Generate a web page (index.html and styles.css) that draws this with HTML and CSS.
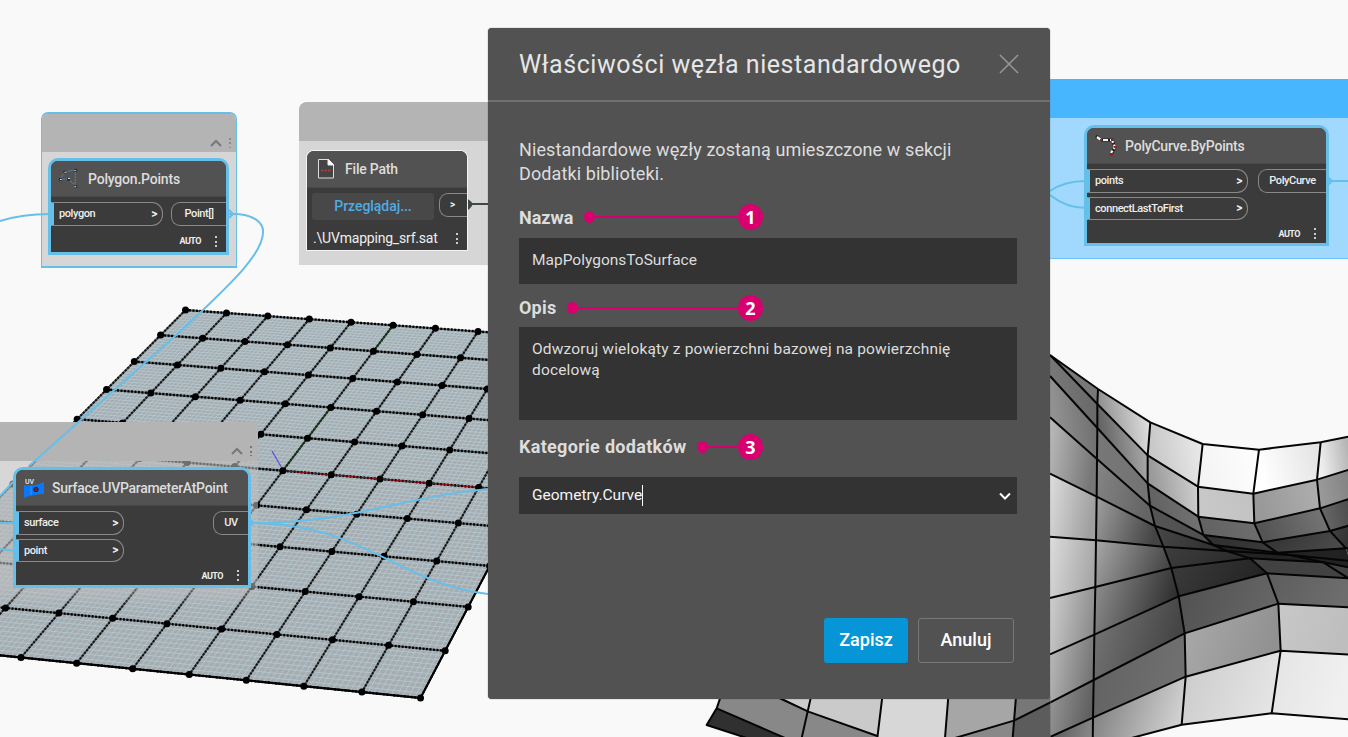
FILE: index.html
```html
<!DOCTYPE html>
<html lang="pl">
<head>
<meta charset="utf-8">
<title>Właściwości węzła niestandardowego</title>
<link rel="stylesheet" href="styles.css">
</head>
<body>
<main class="workspace">
  <svg class="scene" viewBox="0 0 1348 737" aria-hidden="true">
    <defs><clipPath id="front"><path d="M0 200H1081V420H0Z"/></clipPath></defs>
    <g id="plane"></g>
    <g id="surface" transform="translate(1040 330) scale(.33333)"></g>
    <g id="surface-edge" transform="translate(690 600) scale(.33333)" clip-path="url(#front)">
      <path d="M90 290L80 325 50 375 170 414H1100V290Z" fill="#888"/>
      <path d="M80 325L50 375 170 414H285Z" fill="#303030"/>
      <path d="M270 290H362L355 335Z" fill="#ccc"/>
      <path d="M362 290H577L562 408 355 335Z" fill="#cacaca"/>
      <path d="M577 290H775L765 414H562Z" fill="#d7d7d7"/>
      <path d="M775 290H978L972 362 795 414H765Z" fill="#a6a6a6"/>
      <path d="M978 290H1100L1082 308 972 362Z" fill="#777"/>
      <path d="M972 362L1100 296V414H968Z" fill="#5c5c5c"/>
      <path d="M92 290L80 325 50 375 170 414M80 325L285 414M268 294L355 335 562 408M363 290L335 414M577 290L562 414M775 290L765 414M978 290L968 414M795 414L972 362 1084 306" class="edge"/>
    </g>
  </svg>

  <section class="group group-polygon"><div class="group-head"><svg class="caret" viewBox="0 0 12 8"><path d="M1 7L6 2 11 7"/></svg><i class="dots cut"></i></div></section>
  <section class="group group-file"><div class="group-head"></div></section>
  <section class="group group-uv"><div class="group-head"><svg class="caret" viewBox="0 0 12 8"><path d="M1 7L6 2 11 7"/></svg><i class="dots"></i></div></section>
  <section class="group group-curve"><div class="group-head"></div></section>

  <svg class="scene wires" viewBox="0 0 1348 737" aria-hidden="true">
    <path d="M0 221C16 216 30 214 50 214M229 214C254 213 264 223 263 233C262 256 226 288 183 329L29 466M13 482L0 496M0 523H15M0 549L15 551M251 523C355 523 400 497 488 489M251 523C364 523 398 584 488 594"/>
    <path d="M1050 191C1060 184 1072 181 1086 181M1050 195C1060 203 1072 208 1086 208M1328 181H1348"/>
    <path d="M229 210l4 4-4 4M1328 177l4 4-4 4M249 519l5 4-5 4"/>
    <path d="M468 204H488" class="dark"/><path d="M469 201q5 3 0 7z" class="dark"/>
  </svg>

  <article class="node node-polygon">
    <header><svg class="icon" viewBox="0 0 22 22"><path d="M7 3L18 1M18 2V18L10 11 1 11 7 3" fill="none" stroke="#4b83bd" stroke-width="1.3" stroke-dasharray="2 1"/><path d="M5 2h3v3H5zM17 0h3v3h-3zM0 10h3v3H0zM9 10h3v3H9zM17 18h3v3h-3z" fill="#222"/><path d="M6 3h2v1H6zM17 1h2v1h-2zM1 11h2v1H1zM10 10h2v1h-2zM17 19h2v1h-2z" fill="#eee"/></svg><h2>Polygon.Points</h2></header>
    <div class="ports"><div class="inputs"><span class="port in">polygon<b>&gt;</b></span></div><span class="port out">Point[]</span></div>
    <footer>AUTO<i class="dots"></i></footer>
  </article>

  <article class="node node-file">
    <header><svg class="icon" viewBox="0 0 18 22"><path d="M1.5 1.5H11L16.500 7V20H1.500Z" fill="#444" stroke="#ddd"/><path d="M11 1V7H17Z" fill="#fff" stroke="#eee"/><path d="M4 12.500H14" stroke="#a84545" stroke-width="1.500" stroke-dasharray="2.500 1"/></svg><h2>File Path</h2></header>
    <div class="browse-row"><span class="browse">Przeglądaj...</span><span class="port out"><b>&gt;</b></span></div>
    <div class="path-row"><span>.\UVmapping_srf.sat</span><i class="dots"></i></div>
  </article>

  <article class="node node-uv">
    <header><svg class="icon" viewBox="0 0 22 22"><path d="M1 8Q10 10 21 5V17Q10 17 1 21Z" fill="#0878f9"/><path d="M8 9V18" stroke="#3293ff"/><circle cx="13" cy="12.500" r="2.200" fill="#722336" stroke="#172441"/><text x="2" y="6.500" class="icon-text">UV</text></svg><h2>Surface.UVParameterAtPoint</h2></header>
    <div class="ports"><div class="inputs"><span class="port in">surface<b>&gt;</b></span><span class="port in">point<b>&gt;</b></span></div><span class="port out">UV</span></div>
    <footer>AUTO<i class="dots"></i></footer>
  </article>

  <article class="node node-curve">
    <header><svg class="icon" viewBox="0 0 24 24"><path d="M2 2L7 6H18L21 13 17 21" fill="none" stroke="#222" stroke-width="3"/><path d="M3 3L7 6H18L21 13 17 19" fill="none" stroke="#f4f4f4" stroke-width="2.200" stroke-dasharray="5 2"/><path d="M6 5h2v3H6zM17 5h3v2h-3zM20 12h3v2h-3zM16 19h3v3h-3z" fill="#8c2525"/></svg><h2>PolyCurve.ByPoints</h2></header>
    <div class="ports"><div class="inputs"><span class="port in">points<b>&gt;</b></span><span class="port in">connectLastToFirst<b>&gt;</b></span></div><span class="port out">PolyCurve</span></div>
    <footer>AUTO<i class="dots"></i></footer>
  </article>

  <form class="dialog">
    <header class="dialog-head"><h1>Właściwości węzła niestandardowego</h1><svg class="close" viewBox="0 0 20 20"><path d="M1 1L19 19M19 1L1 19"/></svg></header>
    <div class="dialog-body">
      <p class="intro">Niestandardowe węzły zostaną umieszczone w sekcji<br><span>Dodatki biblioteki.</span></p>
      <div class="label-row name-row"><span class="name-label">Nazwa</span><i class="callout"></i><em>1</em></div>
      <div class="field name-field"><span>MapPolygonsToSurface</span></div>
      <div class="label-row desc-row"><span class="desc-label">Opis</span><i class="callout"></i><em>2</em></div>
      <div class="field desc-field"><span>Odwzoruj wielokąty z powierzchni bazowej na powierzchnię<br>docelową</span></div>
      <div class="label-row cat-row"><span class="cat-label">Kategorie dodatków</span><i class="callout"></i><em>3</em></div>
      <div class="field cat-field"><span>Geometry.Curve</span><svg class="chevron" viewBox="0 0 12 8"><path d="M1 1.500L6 6.500 11 1.500"/></svg></div>
      <div class="actions"><button type="button" class="save">Zapisz</button><button type="button" class="cancel">Anuluj</button></div>
    </div>
  </form>
</main>
<script src="scene.js"></script>
</body>
</html>
```
FILE: styles.css
```css
* { box-sizing: border-box; }
body { margin: 0; background: #f9f9f9; font-family: Roboto, "Noto Sans", sans-serif; }
h1, h2, p { margin: 0; font-weight: 400; }
.workspace { position: relative; width: 1348px; height: 737px; overflow: hidden; }
.scene { position: absolute; inset: 0; width: 1348px; height: 737px; }
.edge { fill: none; stroke: #050505; stroke-width: 6; stroke-linejoin: round; }
.wires path { fill: none; stroke: #66bfe9; stroke-width: 2; }
.wires .dark { stroke: #42474a; fill: #333; }
.group { position: absolute; background: rgba(190,190,190,.58); }
.group-head { display: flex; justify-content: flex-end; align-items: flex-end; gap: 7px; background: #b4b4b4; }
.group-polygon { left: 41px; top: 112px; width: 196px; height: 156px; border: 1px solid #66bfe9; border-width: 2px 1px; border-radius: 7px 7px 0 0; background: #d6d6d6; }
.group-polygon .group-head { height: 38px; padding: 0 5px 4px 0; border-radius: 6px 6px 0 0; }
.group-file { left: 299px; top: 102px; width: 200px; height: 163px; border-radius: 8px 0 0 0; background: #d6d6d6; }
.group-file .group-head { height: 39px; border-radius: 8px 0 0 0; }
.group-uv { left: 0; top: 422px; width: 258px; height: 186px; background: linear-gradient(rgba(190,190,190,.58) 88%, transparent); }
.group-uv .group-head { height: 39px; padding: 0 6px 5px 0; }
.group-curve { left: 1040px; top: 79px; width: 310px; height: 180px; background: #a1d9fe; border-bottom: 1px solid #6dc4f4; }
.group-curve .group-head { height: 39px; background: #48b6ff; }
.caret { width: 12px; height: 8px; margin-bottom: 1px; }
.caret path { fill: none; stroke: #777; stroke-width: 2; }
.dots { display: block; width: 2px; height: 11px; background: repeating-linear-gradient(#ccc 0 2px, transparent 2px 4.5px); }
.group-head .dots { background: repeating-linear-gradient(#777 0 2px, transparent 2px 4.5px); height: 10px; }
.group-head .cut { width: 2px; opacity: .7; }
.node { position: absolute; background: #3b3b3b; border-radius: 7px 7px 0 0; color: #eee; box-shadow: 0 0 0 3px #66bfe9; }
.node header { display: flex; align-items: center; height: 36px; background: #525252; border-radius: 7px 7px 0 0; border-bottom: 1px solid #484848; }
.node h2 { font-size: 14px; font-weight: 500; letter-spacing: -.2px; white-space: nowrap; color: #ddd; }
.icon { flex: none; width: 22px; height: 22px; }
.icon-text { font: 700 7px Roboto, sans-serif; fill: #ddd; }
.ports { display: flex; justify-content: space-between; align-items: flex-start; padding-top: 5px; }
.inputs { display: grid; gap: 4px; }
.port { display: flex; align-items: center; height: 23.5px; border: 1px solid #898989; font-size: 11px; font-weight: 500; letter-spacing: -.4px; }
.port b { font-size: 12px; font-weight: 700; }
.in { justify-content: space-between; border-left: 3px solid #66bfe9; border-radius: 0 11px 11px 0; padding: 0 5px; }
.out { justify-content: center; border-right: 0; border-radius: 9px 0 0 9px; }
.node footer { display: flex; align-items: center; justify-content: flex-end; gap: 14px; font-size: 9px; font-weight: 700; letter-spacing: -.5px; }
.node-polygon { left: 51px; top: 161px; width: 175px; height: 91px; }
.node-polygon .icon { margin: 0 11px 0 8px; width: 20px; }
.node-polygon h2 { margin-left: -2px; }
.node-polygon .in { width: 112px; }
.node-polygon .out { width: 55px; }
.node-polygon footer { padding: 10px 9px 0 0; }
.node-file { left: 307px; top: 151px; width: 160px; height: 99px; box-shadow: 0 0 0 1px #f4f4f4; }
.node-file .icon { width: 18px; margin: 0 10px 0 10px; }
.node-file header { height: 37px; }
.browse-row { display: flex; justify-content: space-between; padding: 5px 0 0 5px; }
.browse { display: flex; align-items: center; justify-content: center; width: 122px; height: 27px; border-radius: 3px; background: #484848; color: #50abe3; font-size: 14px; font-weight: 500; letter-spacing: -.05px; padding-bottom: 2px; }
.browse-row .out { width: 28px; padding-right: 2px; }
.browse-row .out b { font-size: 10px; }
.path-row { display: flex; align-items: center; justify-content: space-between; padding: 8px 9px 0 6px; font-size: 14px; line-height: 20px; letter-spacing: -.2px; }
.node-uv { left: 16px; top: 470px; width: 232px; height: 115px; }
.node-uv h2 { letter-spacing: -.28px; }
.node-uv .icon { margin: 0 7px 0 7px; }
.node-uv .in { width: 108px; }
.node-uv .out { width: 35px; }
.node-uv footer { padding: 8px 9px 0 0; }
.node-curve { left: 1087px; top: 128px; width: 239px; height: 115px; }
.node-curve .icon { margin: 0 7px 0 7px; width: 24px; height: 24px; }
.node-curve .in { width: 161px; }
.node-curve .out { width: 68px; }
.node-curve footer { padding: 8px 10px 0 0; }
.dialog { position: absolute; left: 488px; top: 28px; width: 562px; height: 671px; background: #525252; border-radius: 4px; color: #ddd; box-shadow: 0 0 1px #333; }
.dialog-head { display: flex; align-items: center; justify-content: space-between; height: 74px; padding: 0 31px; border-bottom: 2px solid #707070; }
.dialog h1 { font-size: 25px; letter-spacing: .55px; white-space: nowrap; color: #e6e6e6; }
.close { width: 20px; height: 20px; }
.close path { stroke: #979797; stroke-width: 1.500; }
.dialog-body { padding: 36px 33px 0 31px; }
.intro { height: 60px; font-size: 18px; letter-spacing: .1px; line-height: 24px; white-space: nowrap; }
.label-row { display: flex; align-items: center; width: 244px; font-size: 18px; font-weight: 700; letter-spacing: .3px; }
.label-row span { flex: none; }
.name-label { letter-spacing: 0; }
.desc-label { letter-spacing: .2px; }
.callout { position: relative; flex: 1; height: 2px; background: #d8006f; margin-left: 16px; }
.callout::before { content: ""; position: absolute; left: -5px; top: -5px; width: 11px; height: 12px; border-radius: 50%; background: #d8006f; }
.label-row em { display: grid; place-items: center; width: 25px; height: 26px; border-radius: 50%; background: #d8006f; color: #fff; font: 700 18px/1 "Open Sans", sans-serif; }
.name-row { height: 40px; padding-bottom: 2px; }
.field { display: flex; background: #333; font-size: 15.5px; line-height: 21px; padding: 0 13px; white-space: nowrap; color: #ddd; }
.name-field { height: 46px; align-items: center; padding-bottom: 2px; }
.desc-row { height: 43px; padding-top: 4px; }
.desc-field { height: 93px; padding-top: 12px; letter-spacing: .17px; }
.cat-row { height: 57px; padding-bottom: 4px; }
.cat-field { height: 37px; align-items: center; justify-content: space-between; padding-right: 6px; color: #f5f5f5; }
.cat-field span { border-right: 1px solid #fff; }
.chevron { width: 12px; height: 8px; }
.chevron path { fill: none; stroke: #fff; stroke-width: 2; }
.actions { display: flex; justify-content: flex-end; gap: 10px; padding: 104px 3px 0 0; }
.actions button { height: 45px; border-radius: 3px; font: 500 18px Roboto, sans-serif; color: #fff; padding: 0 0 2px; }
.save { width: 84px; border: 0; background: #0696d7; }
.cancel { width: 96px; border: 1px solid #777; background: transparent; }
```
FILE: scene.js
```javascript
const NS = 'http://www.w3.org/2000/svg';
const add = (parent, name, attrs) => {
  const el = document.createElementNS(NS, name);
  for (const key in attrs) el.setAttribute(key, attrs[key]);
  parent.appendChild(el);
  return el;
};

// Perspective projection of the 10 by 10 base grid, from four known nodes.
function projection(pairs) {
  const rows = [];
  pairs.forEach(([u, v, x, y]) => {
    rows.push([u, v, 1, 0, 0, 0, -u * x, -v * x, x]);
    rows.push([0, 0, 0, u, v, 1, -u * y, -v * y, y]);
  });
  for (let i = 0; i < 8; i++) {
    let p = i;
    for (let r = i; r < 8; r++) if (Math.abs(rows[r][i]) > Math.abs(rows[p][i])) p = r;
    [rows[i], rows[p]] = [rows[p], rows[i]];
    const d = rows[i][i];
    rows[i] = rows[i].map(n => n / d);
    for (let r = 0; r < 8; r++) if (r !== i) {
      const f = rows[r][i];
      rows[r] = rows[r].map((n, k) => n - f * rows[i][k]);
    }
  }
  const h = rows.map(r => r[8]);
  return (u, v) => {
    const w = h[6] * u + h[7] * v + 1;
    return [(h[0] * u + h[1] * v + h[2]) / w, (h[3] * u + h[4] * v + h[5]) / w];
  };
}
const at = projection([[0, 0, 185.5, 310], [7, 0, 478, 331.5], [10, 10, 420.5, 698], [3, 10, 21, 657.5]]);
const plane = document.getElementById('plane');
const seg = (a, b, c, d) => `M${at(a, b)}L${at(c, d)}`;
add(plane, 'path', { d: `M${at(0, 0)}L${at(10, 0)}L${at(10, 10)}L${at(0, 10)}Z`, fill: '#a5adb1' });
let fine = '', across = '', down = '';
for (let i = 0; i <= 100; i++) fine += seg(i / 10, 0, i / 10, 10) + seg(0, i / 10, 10, i / 10);
for (let i = 0; i <= 10; i++) { down += seg(i, 0, i, 10); across += seg(0, i, 10, i); }
add(plane, 'path', { d: fine, stroke: '#bdd5df', 'stroke-width': .9, opacity: .65 });
add(plane, 'path', { d: across + down, stroke: '#4b5659', 'stroke-width': 1.8 });
add(plane, 'path', { d: down, stroke: '#111', 'stroke-width': 2, 'stroke-dasharray': '2 1.5' });
add(plane, 'path', { d: across, stroke: '#000', 'stroke-width': 2.4, 'stroke-dasharray': '2 1.5' });
add(plane, 'path', { d: seg(0, 10, 10, 10) + seg(10, 0, 10, 10), stroke: '#000', 'stroke-width': 2 });
add(plane, 'path', { d: seg(5, 5, 10, 5), stroke: '#a00c18', 'stroke-width': 1, 'stroke-dasharray': '5 1' });
add(plane, 'path', { d: seg(5, 0, 5, 1) + seg(5, 3, 5, 5), stroke: '#123d16', 'stroke-width': 1.2 });
add(plane, 'path', { d: 'M283 470L272 451', stroke: '#5954dc', 'stroke-width': 1.3 });
for (let u = 0; u <= 10; u++) for (let v = 0; v <= 10; v++) {
  const [cx, cy] = at(u, v);
  add(plane, 'circle', { cx, cy, r: 3.5 });
}

// Target surface: grid lines from top to bottom, nodes from left to right.
const lines = [
  [[30, 75], [174, 177], [331, 277], [488, 342], [657, 359], [842, 337], [930, 319]],
  [[30, 75], [172, 222], [323, 376], [474, 470], [640, 491], [831, 449], [930, 418]],
  [[30, 138], [172, 294], [323, 460], [475, 560], [643, 580], [840, 535], [930, 506]],
  [[30, 262], [171, 387], [330, 527], [490, 615], [668, 637], [870, 603], [930, 586]],
  [[30, 431], [170, 500], [345, 588], [520, 645], [712, 668], [918, 655], [930, 654]],
  [[30, 620], [168, 631], [370, 650], [560, 663], [750, 675], [930, 693], [930, 693]],
  [[30, 804], [166, 771], [394, 714], [630, 685], [850, 697], [930, 713], [930, 713]],
  [[30, 973], [163, 914], [416, 799], [681, 730], [930, 745]],
  [[30, 1118], [161, 1050], [434, 910], [715, 821], [930, 832]],
  [[30, 1221], [159, 1163], [437, 1040], [722, 962], [930, 974]],
  [[30, 1300], [158, 1255], [425, 1184], [695, 1150], [930, 1168]]
];
const shades = [
  [['#777', '#777'], ['#929292', '#eee'], ['#c8c8c8', '#eee'], ['#f4f4f4', '#fff'], ['#fff', '#e0e0e0'], ['#eee', '#aaa']],
  [['#777', '#666'], ['#656565', '#b5b5b5'], ['#999', '#d8d8d8'], ['#c8c8c8', '#c2c2c2'], ['#999', '#b0b0b0'], ['#999', '#808080']],
  [['#919191', '#686868'], ['#777', '#727272'], ['#626262', '#777'], ['#626262', '#707070'], ['#555', '#7a7a7a'], ['#666', '#4a4a4a']],
  [['#bbb', '#777'], ['#858585', '#646464'], ['#555', '#505050'], ['#2e2e2e', '#393939'], ['#303030', '#4a4a4a'], ['#444', '#333']],
  [['#ddd', '#a0a0a0'], ['#a0a0a0', '#444'], ['#484848', '#303030'], ['#222', '#1c1c1c'], ['#222', '#222'], ['#333', '#333']],
  [['#dcdcdc', '#a8a8a8'], ['#a8a8a8', '#484848'], ['#3e3e3e', '#2b2b2b'], ['#222', '#222'], ['#222', '#222'], ['#333', '#333']],
  [['#d0d0d0', '#8e8e8e'], ['#939393', '#303030'], ['#3c3c3c', '#242424'], ['#333', '#4c4c4c']],
  [['#bcbcbc', '#777'], ['#777', '#444'], ['#505050', '#656565'], ['#5c5c5c', '#6d6d6d']],
  [['#999', '#606060'], ['#616161', '#707070'], ['#aaa', '#919191'], ['#c8c8c8', '#bebebe']],
  [['#555', '#888'], ['#777', '#cfcfcf'], ['#cacaca', '#e4e4e4'], ['#e4e4e4', '#f0f0f0']]
];
const surface = document.getElementById('surface');
const defs = add(surface, 'defs', {});
shades.forEach((row, r) => row.forEach(([from, to], c) => {
  const id = `s${r}-${c}`;
  const g = add(defs, 'linearGradient', { id, x2: 1, y2: r < 3 ? -.2 : .25 });
  add(g, 'stop', { offset: 0, 'stop-color': from });
  add(g, 'stop', { offset: 1, 'stop-color': to });
  const quad = [lines[r][c], lines[r][c + 1], lines[r + 1][c + 1], lines[r + 1][c]];
  if (quad.every(Boolean)) add(surface, 'polygon', { points: quad.join(' '), fill: `url(#${id})` });
}));
add(surface, 'polygon', { points: '850,697 930,713 930,745 681,730 630,685', fill: '#424242' });
lines.forEach(l => add(surface, 'polyline', { points: l.join(' '), class: 'edge' }));
for (let c = 1; c < 4; c++) add(surface, 'polyline', { points: lines.map(l => l[c]).join(' '), class: 'edge' });
add(surface, 'polyline', { points: [...lines.slice(0, 7).map(l => l[4]), [930, 748]].join(' '), class: 'edge' });
add(surface, 'polyline', { points: lines.slice(0, 5).map(l => l[5]).join(' '), class: 'edge' });
```
